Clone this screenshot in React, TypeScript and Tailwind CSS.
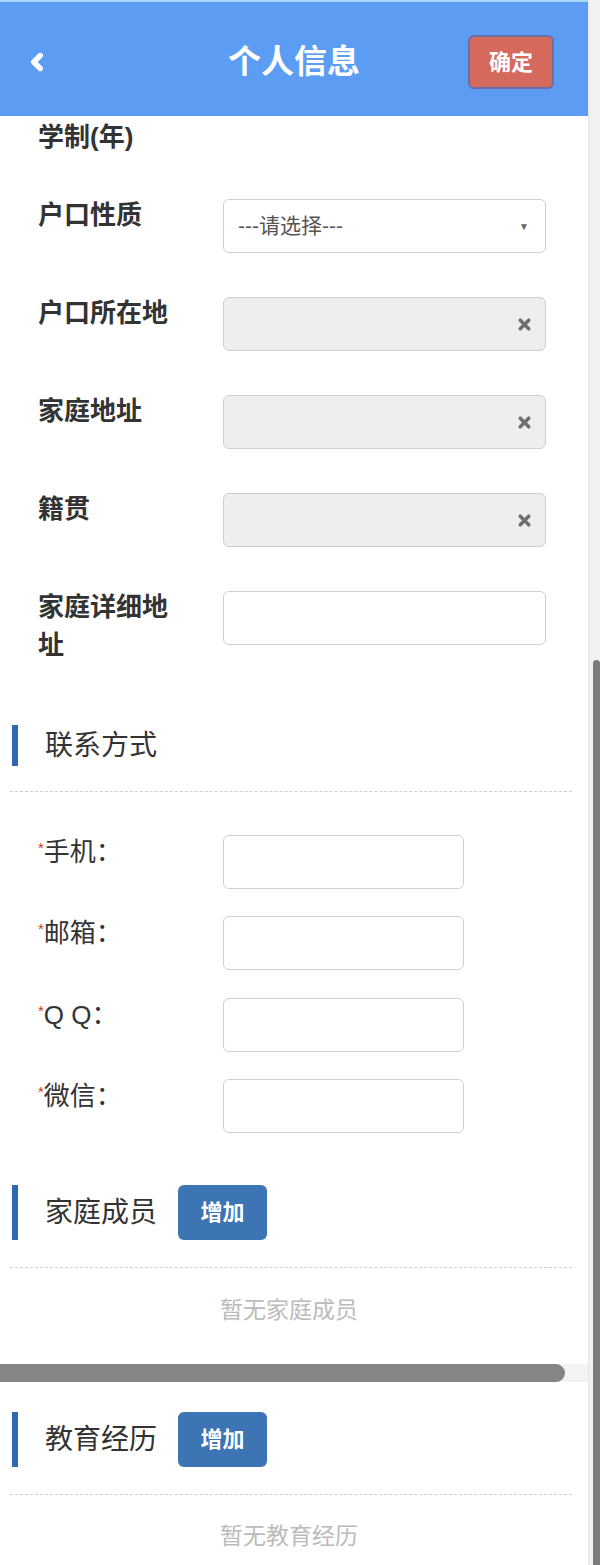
import { ChevronLeft, X } from "lucide-react";
import type { ReactNode } from "react";

function FieldRow({
  label,
  children,
  className = "",
}: {
  label: string;
  children: ReactNode;
  className?: string;
}) {
  return (
    <div className={`flex items-start pl-[38px] ${className}`}>
      <div className="w-[140px] -mt-[3px] text-[26px] leading-[38px] font-bold text-[#333]">
        {label}
      </div>
      <div className="ml-[45px]">{children}</div>
    </div>
  );
}

function ClearBox() {
  return (
    <div className="w-[323px] h-[54px] rounded-[6px] border border-[#cfcfcf] bg-[#eeeeee] flex items-center justify-end pr-[12px]">
      <X className="w-[17px] h-[17px] text-[#6f6f6f]" strokeWidth={5} />
    </div>
  );
}

function ContactRow({ label, className = "" }: { label: string; className?: string }) {
  return (
    <div className={`flex items-start pl-[38px] ${className}`}>
      <div className="w-[185px] text-[26px] leading-[34px] text-[#333]">
        <span className="text-[#c0392b] text-[15px] align-top leading-[26px]">*</span>
        {label}
      </div>
      <div className="w-[241px] h-[54px] rounded-[6px] border border-[#cfcfcf] bg-white" />
    </div>
  );
}

function SectionTitle({ title, add, className = "" }: { title: string; add?: boolean; className?: string }) {
  return (
    <div className={`flex items-stretch ${add ? "h-[55px]" : "h-[41px]"} ${className}`}>
      <div className="ml-[12px] w-[6px] bg-[#2f68b0]" />
      <div className="ml-[27px] flex items-center text-[28px] text-[#333]">{title}</div>
      {add && (
        <button
          type="button"
          className="ml-[21px] w-[89px] rounded-[6px] bg-[#3c74b4] text-white text-[22px] font-bold"
        >
          增加
        </button>
      )}
    </div>
  );
}

function Dashed({ className = "" }: { className?: string }) {
  return <div className={`ml-[10px] w-[562px] border-t border-dashed border-[#cfcfcf] ${className}`} />;
}

export default function App() {
  return (
    <div className="flex w-[600px] h-[1565px] overflow-hidden bg-white font-['Liberation_Sans','Noto_Sans_CJK_SC',sans-serif]">
      <main className="w-[588px] flex flex-col">
        <header className="h-[116px] bg-[#5c9cf2] border-t-2 border-[#a9d6f2] flex items-center pt-[6px]">
          <div className="w-[120px] pl-[24px]">
            <ChevronLeft className="w-[26px] h-[26px] text-white" strokeWidth={5} />
          </div>
          <div className="flex-1 text-center text-white text-[33px] font-semibold">个人信息</div>
          <div className="w-[120px] flex justify-end pr-[34px]">
            <button
              type="button"
              className="w-[88px] h-[54px] rounded-[6px] bg-[#d5695b] border-2 border-[#6a6ea6] text-white text-[22px] font-bold"
            >
              确定
            </button>
          </div>
        </header>

        <div className="mt-[2px] pl-[38px] text-[26px] leading-[38px] font-bold text-[#333]">学制(年)</div>

        <FieldRow label="户口性质" className="mt-[43px]">
          <div className="w-[323px] h-[54px] rounded-[6px] border border-[#cfcfcf] bg-white flex items-center justify-between pl-[14px] pr-[16px]">
            <span className="text-[21px] text-[#555]">---请选择---</span>
            <span className="text-[10px] text-[#666]">▼</span>
          </div>
        </FieldRow>
        <FieldRow label="户口所在地" className="mt-[44px]">
          <ClearBox />
        </FieldRow>
        <FieldRow label="家庭地址" className="mt-[44px]">
          <ClearBox />
        </FieldRow>
        <FieldRow label="籍贯" className="mt-[44px]">
          <ClearBox />
        </FieldRow>
        <FieldRow label="家庭详细地址" className="mt-[44px]">
          <div className="w-[323px] h-[54px] rounded-[6px] border border-[#cfcfcf] bg-white" />
        </FieldRow>

        <SectionTitle title="联系方式" className="mt-[61px]" />
        <Dashed className="mt-[25px]" />

        <ContactRow label="手机：" className="mt-[43px]" />
        <ContactRow label="邮箱：" className="mt-[27px]" />
        <ContactRow label="Q Q：" className="mt-[28px]" />
        <ContactRow label="微信：" className="mt-[27px]" />

        <SectionTitle title="家庭成员" add className="mt-[52px]" />
        <Dashed className="mt-[27px]" />
        <div className="mt-[27px] text-center text-[23px] leading-[30px] text-[#bbb] pr-[10px]">暂无家庭成员</div>

        <div className="mt-[39px] h-[18px] bg-[#f3f3f3]">
          <div className="w-[565px] h-full rounded-r-full bg-[#858585]" />
        </div>

        <SectionTitle title="教育经历" add className="mt-[30px]" />
        <Dashed className="mt-[27px]" />
        <div className="mt-[26px] text-center text-[23px] leading-[30px] text-[#bbb] pr-[10px]">暂无教育经历</div>
      </main>

      <aside className="w-[12px] flex flex-col bg-[#f1f1f1] border-l border-[#e6e6e6]">
        <div className="h-[660px]" />
        <div className="flex-1 ml-[4px] rounded-t-full bg-[#7b7b7b]" />
      </aside>
    </div>
  );
}
